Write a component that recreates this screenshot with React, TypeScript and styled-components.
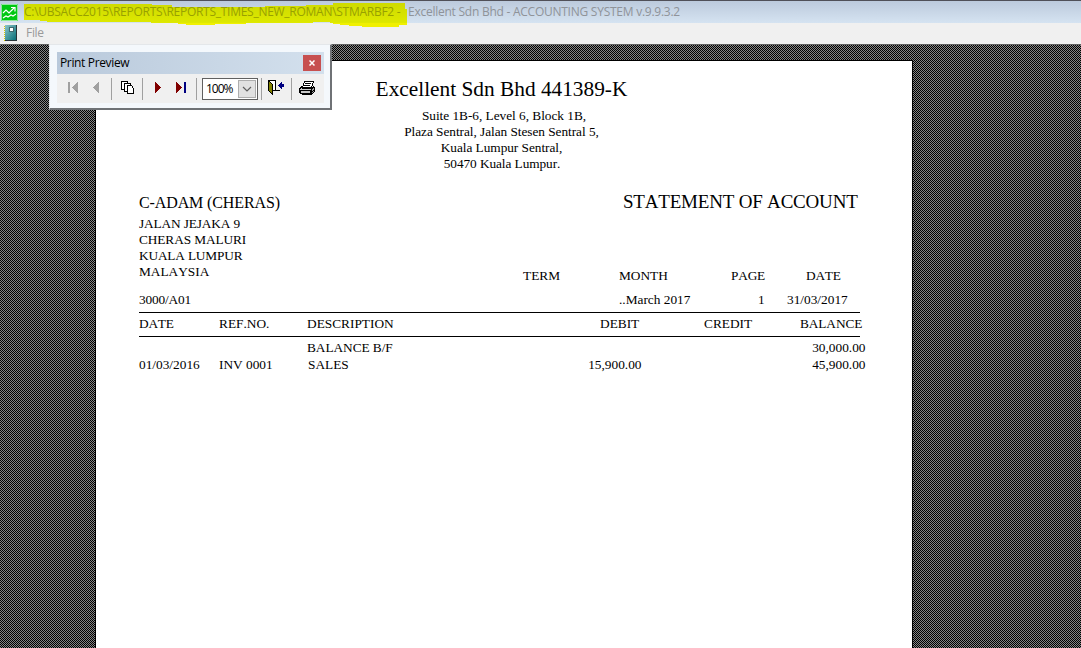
import React from "react";
import styled, { createGlobalStyle } from "styled-components";

const Global = createGlobalStyle`
  * { box-sizing: border-box; }
  body { margin: 0; background: #fff; overflow: hidden; }
`;

const Window = styled.div`
  position: relative;
  width: 1081px;
  height: 648px;
  display: flex;
  flex-direction: column;
  overflow: hidden;
  font-family: "Open Sans", "Noto Sans", sans-serif;
`;

const TitleBar = styled.header`
  position: relative;
  z-index: 1;
  height: 23px;
  flex: none;
  display: flex;
  align-items: center;
  border-top: 1px solid #505058;
  background: linear-gradient(#bccadc, #d5e3f1);
  padding-left: 1px;
`;

const TitleText = styled.span<{ $w: number; $ls: number; $marked?: boolean }>`
  position: relative;
  width: ${(p) => p.$w}px;
  flex: none;
  font-size: 12px;
  line-height: 20px;
  letter-spacing: ${(p) => p.$ls}px;
  white-space: pre;
  color: ${(p) => (p.$marked ? "#98a000" : "#8f9399")};
`;

const Marker = styled.svg`
  position: absolute;
  left: 0;
  top: -1px;
  overflow: visible;
`;

const AppIcon = styled.svg`
  margin-right: 6px;
  flex: none;
`;

const MenuBar = styled.nav`
  height: 21px;
  flex: none;
  display: flex;
  align-items: center;
  gap: 9px;
  padding: 0 0 2px 4px;
  background: #f0f0f0;
  font-size: 12px;
  line-height: 20px;
  color: #9a9a9a;
`;

const MenuItem = styled.span`
  letter-spacing: -0.3px;
`;

const Desk = styled.main`
  flex: 1;
  min-height: 0;
  border-top: 1px solid #606060;
  padding: 15px 0 0 95px;
  background: repeating-conic-gradient(#000 0 25%, #848484 0 50%) 0 0 / 2px 2px;
`;

const Sheet = styled.article`
  width: 818px;
  height: 600px;
  border: 1px solid #000;
  background: #fff;
  color: #000;
  padding: 16px 0 0 43px;
  font-family: "Liberation Serif", "Times New Roman", serif;
  font-size: 13.33px;
  line-height: 16px;
  font-kerning: none;
`;

const Letterhead = styled.div`
  width: 725px;
  display: flex;
  flex-direction: column;
  align-items: center;
`;

const Company = styled.h1`
  margin: 0 0 7px;
  font-size: 21.33px;
  font-weight: 400;
  line-height: 24px;
`;

const Line = styled.span<{ $ls?: number; $indent?: number }>`
  display: block;
  white-space: pre;
  padding-left: ${(p) => p.$indent ?? 0}px;
  letter-spacing: ${(p) => p.$ls ?? 0}px;
`;

const Parties = styled.section`
  display: flex;
  margin-top: 19px;
  height: 89px;
`;

const Customer = styled.div`
  width: 484px;
`;

const CustomerName = styled.h2`
  margin: 0 0 2px;
  font-size: 16px;
  font-weight: 400;
  line-height: 23px;
  letter-spacing: -0.12px;
`;

const DocumentTitle = styled.h2`
  margin: 0;
  font-size: 19px;
  font-weight: 400;
  line-height: 22px;
  letter-spacing: -0.2px;
`;

const Row = styled.div<{ $cols: string; $h: number; $top?: number }>`
  display: grid;
  grid-template-columns: ${(p) => p.$cols};
  height: ${(p) => p.$h}px;
  padding-top: ${(p) => p.$top ?? 0}px;
  align-items: start;
`;

const Rule = styled.hr`
  width: 721px;
  height: 1px;
  margin: 0;
  border: 0;
  background: #000;
`;

const Meta = styled.section`
  margin: -12px 0 0 384px;
`;

const Palette = styled.aside`
  position: absolute;
  z-index: 2;
  left: 49px;
  top: 44px;
  width: 283px;
  height: 66px;
  border: 1px solid #e4e7ea;
  border-right: 2px solid #6f7276;
  border-bottom: 2px solid #6f7276;
  background: #f4f8fc;
  padding: 7px 6px 0 7px;
`;

const PaletteTitle = styled.div`
  height: 22px;
  display: flex;
  align-items: center;
  justify-content: space-between;
  background: linear-gradient(90deg, #b9c9db, #d3e0ed);
  padding: 0 3px;
  font-size: 12px;
  line-height: 16px;
  letter-spacing: -0.35px;
  color: #000;
`;

const Close = styled.button`
  width: 18px;
  height: 16px;
  padding: 0;
  border: 0;
  background: #c75050;
  display: grid;
  place-items: center;
`;

const Tools = styled.div`
  height: 29px;
  display: flex;
  align-items: center;
  background: #f0f0f0;
`;

const Tool = styled.button<{ $w: number }>`
  width: ${(p) => p.$w}px;
  height: 29px;
  flex: none;
  padding: 0;
  border: 0;
  background: none;
  display: block;
  & > svg { display: block; }
`;

const Divider = styled.i`
  width: 1px;
  height: 22px;
  flex: none;
  background: #a0a0a0;
`;

const Zoom = styled.div`
  width: 56px;
  height: 22px;
  margin: 0 3px 0 5px;
  flex: none;
  display: flex;
  align-items: center;
  justify-content: space-between;
  border: 1px solid #606060;
  background: #fff;
  padding: 0 1px 0 3px;
  font-size: 12px;
  letter-spacing: -1px;
`;

const Drop = styled.span`
  width: 18px;
  height: 18px;
  border: 1px solid #adadad;
  background: #e1e1e1;
  display: grid;
  place-items: center;
`;

function ChartLogo() {
  return (
    <AppIcon width="17" height="17" viewBox="0 0 17 17">
      <rect width="17" height="17" fill="#00c814" />
      <path d="M.5.5h16v16H.5z" fill="none" stroke="#8fe89a" />
      <path d="M2 9l3-3 3 3 5-5M10 3.5h4v4M2 14l3-2 2 1 3-2 2 1 3-2" fill="none" stroke="#fff" strokeWidth="1.2" />
    </AppIcon>
  );
}

function BookIcon() {
  return (
    <svg width="13" height="16" viewBox="0 0 13 16" shapeRendering="crispEdges">
      <defs>
        <linearGradient id="cover" x1="0" y1="0" x2="1" y2="1">
          <stop offset="0" stopColor="#8cc4c8" />
          <stop offset="1" stopColor="#087078" />
        </linearGradient>
      </defs>
      <path d="M1 0h11v15H1z" fill="url(#cover)" />
      <path d="M12 0h1v16H1v-1h11z" fill="#283438" />
      <path d="M5 2h5v5H5z" fill="#40686c" />
      <path d="M6 3h3v3H6z" fill="#fff" />
      <path d="M.5 1v15" stroke="#d8c800" strokeWidth="1" strokeDasharray="1 1" />
    </svg>
  );
}

function Glyph({ w, children }: { w: number; children: React.ReactNode }) {
  return (
    <svg width={w} height="29" viewBox={`0 0 ${w} 29`} shapeRendering="crispEdges">
      {children}
    </svg>
  );
}

const META = "96px 112px 75px 1fr";
const VALUES = "480px 139px 29px 1fr";
const HEAD = "80px 88px 293px 104px 96px 1fr";
const BROUGHT = "168px 335px 223.5px";
const ENTRY = "80px 89px 100px 233.5px 224px";

const Amount = styled(Line)`
  text-align: right;
`;

export default function App() {
  return (
    <Window>
      <Global />
      <TitleBar>
        <ChartLogo />
        <Marker width="410" height="27">
          <defs>
            <linearGradient id="ink" x1="0" y1="0" x2="0" y2="27" gradientUnits="userSpaceOnUse">
              <stop offset="0" stopColor="#ccd800" />
              <stop offset=".83" stopColor="#dde800" />
              <stop offset=".86" stopColor="#f0f000" />
              <stop offset="1" stopColor="#f0f000" />
            </linearGradient>
          </defs>
          <path
            d="M24 4H152V5H172V7H265V6H306V5H333V3H405V9H407V25H399V27H362V26H349V25H340V24H333V23H330V22H313V23H246V24H215V25H186V24H178V23H151V22H47V21H40V20H24Z"
            fill="url(#ink)"
            shapeRendering="crispEdges"
          />
        </Marker>
        <TitleText $w={384} $ls={-0.27} $marked>
          {"C:\\UBSACC2015\\REPORTS\\REPORTS_TIMES_NEW_ROMAN\\STMARBF2 -"}
        </TitleText>
        <TitleText $w={280} $ls={-0.25}>Excellent Sdn Bhd - ACCOUNTING SYSTEM v.9.9.3.2</TitleText>
      </TitleBar>
      <MenuBar>
        <BookIcon />
        <MenuItem>File</MenuItem>
      </MenuBar>
      <Desk>
        <Sheet>
          <Letterhead>
            <Company>Excellent Sdn Bhd 441389-K</Company>
            <Line $indent={5} $ls={-0.03}>Suite 1B-6, Level 6, Block 1B,</Line>
            <Line $ls={-0.05}>Plaza Sentral, Jalan Stesen Sentral 5,</Line>
            <Line $ls={-0.05}>Kuala Lumpur Sentral,</Line>
            <Line $indent={1} $ls={-0.08}>50470 Kuala Lumpur.</Line>
          </Letterhead>
          <Parties>
            <Customer>
              <CustomerName>C-ADAM (CHERAS)</CustomerName>
              <Line $ls={-0.14}>JALAN JEJAKA 9</Line>
              <Line $ls={-0.1}>CHERAS MALURI</Line>
              <Line $ls={-0.18}>KUALA LUMPUR</Line>
              <Line>MALAYSIA</Line>
            </Customer>
            <DocumentTitle>STATEMENT OF ACCOUNT</DocumentTitle>
          </Parties>
          <Meta>
            <Row $cols={META} $h={24}>
              <Line>TERM</Line>
              <Line>MONTH</Line>
              <Line $ls={-0.2}>PAGE</Line>
              <Line $ls={-0.2}>DATE</Line>
            </Row>
          </Meta>
          <Row $cols={VALUES} $h={20}>
            <Line $ls={-0.15}>3000/A01</Line>
            <Line>..March 2017</Line>
            <Line>1</Line>
            <Line>31/03/2017</Line>
          </Row>
          <Rule />
          <Row $cols={HEAD} $h={23} $top={3}>
            <Line $ls={-0.2}>DATE</Line>
            <Line>REF.NO.</Line>
            <Line>DESCRIPTION</Line>
            <Line>DEBIT</Line>
            <Line>CREDIT</Line>
            <Line $ls={-0.1}>BALANCE</Line>
          </Row>
          <Rule />
          <Row $cols={BROUGHT} $h={20} $top={3}>
            <span />
            <Line $ls={-0.05}>BALANCE B/F</Line>
            <Amount>30,000.00</Amount>
          </Row>
          <Row $cols={ENTRY} $h={17}>
            <Line>01/03/2016</Line>
            <Line>INV 0001</Line>
            <Line>SALES</Line>
            <Amount>15,900.00</Amount>
            <Amount>45,900.00</Amount>
          </Row>
        </Sheet>
      </Desk>
      <Palette>
        <PaletteTitle>
          Print Preview
          <Close aria-label="Close">
            <svg width="6" height="6" viewBox="0 0 6 6">
              <path d="M.5.5l5 5M5.5.5l-5 5" stroke="#fff" strokeWidth="1.5" />
            </svg>
          </Close>
        </PaletteTitle>
        <Tools>
          <Tool $w={27}><Glyph w={27}><path d="M11 8h2v11h-2zM21 8v11h-1v-1h-1v-1h-1v-1h-1v-1h-1v-1h-1v-1h1v-1h1v-1h1v-1h1v-1h1v-1z" fill="#a0a0a0" /></Glyph></Tool>
          <Tool $w={27}><Glyph w={27}><path d="M15 8v11h-1v-1h-1v-1h-1v-1h-1v-1h-1v-1h-1v-1h1v-1h1v-1h1v-1h1v-1h1v-1z" fill="#a0a0a0" /></Glyph></Tool>
          <Divider />
          <Tool $w={30}>
            <Glyph w={30}>
              <path d="M9.500 7.500h6v8h-6z" fill="#fff" stroke="#000" />
              <path d="M12.500 9.500h6v8h-6z" fill="#fff" stroke="#000" />
              <path d="M15.500 11.500h4l2 3v5h-6z" fill="#fff" stroke="#000" />
            </Glyph>
          </Tool>
          <Divider />
          <Tool $w={26}><Glyph w={26}><path d="M12 8h1v1h1v1h1v1h1v1h1v1h1v1h-1v1h-1v1h-1v1h-1v1h-1v1h-1z" fill="#800000" /></Glyph></Tool>
          <Tool $w={27}><Glyph w={27}><path d="M7 8h1v1h1v1h1v1h1v1h1v1h1v1h-1v1h-1v1h-1v1h-1v1H8v1H7z" fill="#800000" /><path d="M15 8h2v11h-2z" fill="#000080" /></Glyph></Tool>
          <Divider />
          <Zoom>
            100%
            <Drop>
              <svg width="10" height="6" viewBox="0 0 10 6"><path d="M1 1l4 4 4-4" fill="none" stroke="#606060" strokeWidth="1.2" /></svg>
            </Drop>
          </Zoom>
          <Divider />
          <Tool $w={29}>
            <Glyph w={29}>
              <path d="M6.500 6.500h7v10h-7z" fill="#fff" stroke="#000" />
              <path d="M6 6h1v1h1v1h1v1h1v1h1v11h-1v-1H9v-1H8v-1H7v-1H6z" fill="#000" />
              <path d="M7 8h1v1h1v1h1v9H9v-1H8v-1H7z" fill="#808000" />
              <path d="M13 16h5v1h-5z" fill="#000" />
              <path d="M16 11h1v-1h1V9h1V8h1v2h2v3h-2v2h-1v-1h-1v-1h-1v-1h-1z" fill="#000080" />
            </Glyph>
          </Tool>
          <Divider />
          <Tool $w={32}>
            <Glyph w={32}>
              <path d="M12.500 7.500h9l-2 6h-9z" fill="#fff" stroke="#000" />
              <path d="M13 9.500h6M12 11.500h6" stroke="#000" />
              <path d="M9 12h2v2h8l2-2h1v1h1v5h-1v1h-1v1h-1v1H10v-1H8v-1H7v-5h1v-1h1z" fill="#000" />
              <path d="M9 14h1v1h9v1H8v-1h1zM9 17h9v2H9z" fill="#c8c8c8" />
              <path d="M20 15h1v-1h1v2h-1v1h-1zM20 18h1v-1h1v1h-1v1h-1z" fill="#a0a0a0" />
            </Glyph>
          </Tool>
        </Tools>
      </Palette>
    </Window>
  );
}
